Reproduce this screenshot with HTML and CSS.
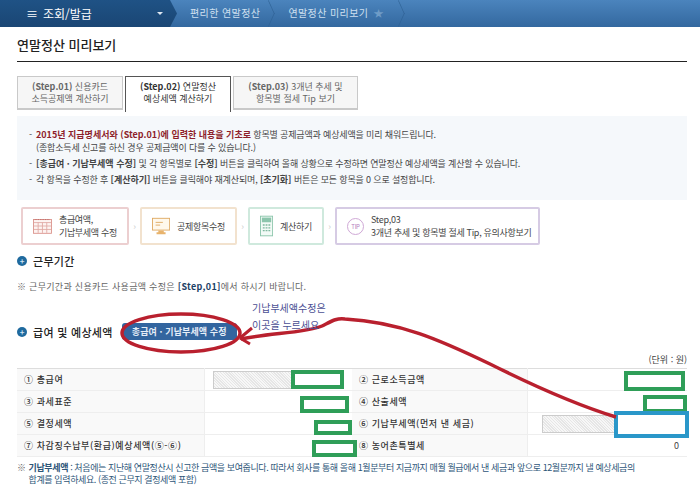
FILE: index.html
```html
<!DOCTYPE html>
<html lang="ko">
<head>
    <meta charset="UTF-8">
    <title>연말정산 미리보기</title>
    <link rel="stylesheet" href="styles.css">
</head>
<body>
    <nav class="topnav">
        <div class="nav-main">
            <span class="nav-burger">≡</span>
            <span class="nav-title">조회/발급</span>
            <span class="nav-caret"></span>
        </div>
        <div class="nav-crumb nav-crumb-first">편리한 연말정산</div>
        <div class="nav-crumb nav-crumb-last">연말정산 미리보기 <span class="nav-star">★</span></div>
    </nav>

    <div class="page">
        <h1 class="page-title">연말정산 미리보기</h1>

        <div class="tabs">
            <div class="tab"><b>(Step.01)</b> 신용카드<br>소득공제액 계산하기</div>
            <div class="tab tab-on"><b>(Step.02)</b> 연말정산<br>예상세액 계산하기</div>
            <div class="tab"><b>(Step.03)</b> 3개년 추세 및<br>항목별 절세 Tip 보기</div>
        </div>

        <div class="infobox">
            <p><span class="dot">-</span><b class="red">2015년 지급명세서와 (Step.01)에 입력한 내용을 기초로</b> 항목별 공제금액과 예상세액을 미리 채워드립니다.<br>(종합소득세 신고를 하신 경우 공제금액이 다를 수 있습니다.)</p>
            <p><span class="dot">-</span><b>[총급여 · 기납부세액 수정]</b> 및 각 항목별로 <b>[수정]</b> 버튼을 클릭하여 올해 상황으로 수정하면 연말정산 예상세액을 계산할 수 있습니다.</p>
            <p><span class="dot">-</span>각 항목을 수정한 후 <b>[계산하기]</b> 버튼을 클릭해야 재계산되며, <b>[초기화]</b> 버튼은 모든 항목을 0 으로 설정합니다.</p>
        </div>

        <div class="flow">
            <div class="flow-card flow-red">
                <svg width="22" height="18" viewBox="0 0 22 18"><rect x="0.5" y="1.5" width="21" height="16" fill="#fdf3f1" stroke="#d98f88"/><path d="M1 5h20M1 9h20M1 13h20M6 5v12M11 5v12M16 5v12" stroke="#e0a9a3" fill="none"/><path d="M2 1.5h18" stroke="#b9605a" stroke-dasharray="1 1" fill="none"/></svg>
                <span>총급여액,<br>기납부세액 수정</span>
            </div>
            <span class="flow-sep">›</span>
            <div class="flow-card flow-orange">
                <svg width="20" height="20" viewBox="0 0 20 20"><rect x="0.5" y="1.5" width="19" height="13" fill="#fff8ec" stroke="#dfa860"/><path d="M4 6h8M4 9h5" stroke="#dfa860" fill="none"/><path d="M7 15h6v2H7zM5 17h10v2H5z" fill="#e8b36c"/></svg>
                <span>공제항목수정</span>
            </div>
            <span class="flow-sep">›</span>
            <div class="flow-card flow-green">
                <svg width="14" height="22" viewBox="0 0 14 22"><rect x="0.5" y="0.5" width="13" height="21" fill="#f2faf6" stroke="#8cc5ac"/><rect x="2" y="2" width="10" height="5" fill="#8cc5ac"/><path d="M3 10h2M6 10h2M9 10h2M3 13h2M6 13h2M9 13h2M3 16h2M6 16h2M9 16h2" stroke="#7fb89f" stroke-width="1.5" fill="none"/></svg>
                <span>계산하기</span>
            </div>
            <span class="flow-sep">›</span>
            <div class="flow-card flow-purple">
                <span class="tip-badge">TIP</span>
                <span>Step,03<br>3개년 추세 및 항목별 절세 Tip, 유의사항보기</span>
            </div>
        </div>

        <h2 class="sec-head"><span class="sec-dot">+</span>근무기간</h2>
        <p class="note">※ 근무기간과 신용카드 사용금액 수정은 <b class="navy">[Step,01]</b>에서 하시기 바랍니다.</p>

        <div class="sec-row">
            <h2 class="sec-head"><span class="sec-dot">+</span>급여 및 예상세액</h2>
            <span class="edit-btn">총급여 · 기납부세액 수정</span>
        </div>

        <p class="unit">(단위 : 원)</p>
        <table class="tax-table">
            <tr>
                <th>① 총급여</th><td><span class="hatch hatch-left"></span></td>
                <th>② 근로소득금액</th><td></td>
            </tr>
            <tr>
                <th>③ 과세표준</th><td></td>
                <th>④ 산출세액</th><td></td>
            </tr>
            <tr>
                <th>⑤ 결정세액</th><td></td>
                <th>⑥ 기납부세액(먼저 낸 세금)</th><td><span class="hatch hatch-right"></span></td>
            </tr>
            <tr>
                <th>⑦ 차감징수납부(환급)예상세액(⑤-⑥)</th><td></td>
                <th>⑧ 농어촌특별세</th><td class="num">0</td>
            </tr>
        </table>

        <p class="foot"><span class="foot-mark">※</span><span><b>기납부세액</b> : 처음에는 지난해 연말정산시 신고한 금액을 보여줍니다. 따라서 회사를 통해 올해 1월분부터 지금까지 매월 월급에서 낸 세금과 앞으로 12월분까지 낼 예상세금의<br>합계를 입력하세요. (종전 근무지 결정세액 포함)</span></p>
    </div>

    <!-- hand drawn marks on top of the screenshot -->
    <svg class="marks" width="700" height="498" viewBox="0 0 700 498">
        <g fill="#fff" stroke="#2f9e58" stroke-width="4">
            <rect x="293" y="372" width="49" height="15"/>
            <rect x="302" y="398" width="45" height="13"/>
            <rect x="316" y="422" width="34" height="11"/>
            <rect x="314" y="442" width="41" height="13"/>
            <rect x="626" y="373" width="57" height="16"/>
            <rect x="645" y="397" width="40" height="14"/>
        </g>
        <rect x="616" y="413" width="71" height="23" fill="#fff" stroke="#2a97c9" stroke-width="4"/>
        <g fill="none" stroke="#b9202e">
            <ellipse cx="181" cy="333" rx="59" ry="19" stroke-width="3.5"/>
            <path d="M241 339C270 333 305 333 322 326C332 321 336 318 345 319C400 322 440 340 490 364C530 384 580 406 616 417" stroke-width="3.5"/>
            <path d="M240 338l12 -10M240 338l10 6" stroke-width="3"/>
        </g>
    </svg>
    <div class="callout">기납부세액수정은<br>이곳을 누르세요</div>
</body>
</html>
```

FILE: styles.css
```css
html, body {
    margin: 0;
    padding: 0;
}
body {
    width: 700px;
    height: 498px;
    overflow: hidden;
    position: relative;
    background: #fff;
    color: #444;
    font-family: "Noto Sans CJK KR", "Noto Sans", sans-serif;
    font-size: 9px;
}
b {
    font-weight: 700;
}
p, h1, h2 {
    margin: 0;
}

.topnav {
    height: 27px;
    display: flex;
    align-items: center;
    background: linear-gradient(#4b84bd, #33689f);
    color: #cfe0f0;
    font-size: 10px;
    letter-spacing: 0.4px;
}
.nav-main {
    width: 177px;
    height: 27px;
    box-sizing: border-box;
    padding: 0 14px 0 26px;
    display: flex;
    align-items: center;
    color: #fff;
    letter-spacing: 0;
    background: linear-gradient(#1f5285, #1a4674);
    clip-path: polygon(0 0, 170px 0, 100% 50%, 170px 100%, 0 100%);
}
.nav-burger {
    font-size: 12px;
    width: 17px;
}
.nav-title {
    font-size: 12px;
    flex: 1;
}
.nav-caret {
    border: 3px solid transparent;
    border-top: 3px solid #dfe8f2;
    border-bottom: 0;
}
.nav-crumb {
    position: relative;
    height: 27px;
    line-height: 26px;
    padding-right: 28px;
}
.nav-crumb-first {
    margin-left: 13px;
}
.nav-crumb-last {
    padding-right: 0;
}
/* thin chevron after each crumb */
.nav-crumb::after {
    content: "";
    position: absolute;
    top: 4px;
    right: 10px;
    width: 18px;
    height: 18px;
    border-top: 1px solid #2f6295;
    border-right: 1px solid #2f6295;
    transform: scaleX(0.45) rotate(45deg);
}
.nav-crumb-last::after {
    right: -24px;
}
.nav-star {
    color: #6f9cc7;
    margin-left: 2px;
}

.page {
    padding: 0 13px 0 17px;
}
.page-title {
    height: 34px;
    border-bottom: 1px solid #222;
    font-size: 13px;
    font-weight: 500;
    line-height: 35px;
    color: #222;
}

.tabs {
    display: flex;
    gap: 2px;
    margin-top: 14px;
    height: 35px;
    align-items: flex-start;
}
.tab {
    width: 106px;
    height: 34px;
    box-sizing: border-box;
    padding-top: 4px;
    border: 1px solid #c9c9c9;
    border-bottom-width: 2px;
    background: #f6f6f6;
    color: #666;
    line-height: 12px;
    text-align: center;
}
.tab-on {
    height: 36px;
    background: #fff;
    border: 1px solid #555;
    border-bottom: 0;
    color: #333;
}
.tab:last-child {
    width: 125px;
}

.infobox {
    margin-top: 5px;
    height: 84px;
    box-sizing: border-box;
    padding: 12px 12px 0;
    background: #f5f8fb;
    color: #444;
    line-height: 13px;
    letter-spacing: -0.15px;
}
.infobox b {
    letter-spacing: 0;
}
.infobox p {
    margin-bottom: 3px;
    padding-left: 7px;
    white-space: nowrap;
}
.dot {
    display: inline-block;
    width: 7px;
    margin-left: -7px;
}
.red {
    color: #8e1f2b;
}

.flow {
    display: flex;
    align-items: center;
    margin: 7px 0 0 4px;
    height: 38px;
    color: #444;
    line-height: 13px;
    letter-spacing: -0.3px;
}
.flow-card {
    height: 38px;
    box-sizing: border-box;
    border: 2px solid;
    border-radius: 2px;
    display: flex;
    align-items: center;
    gap: 7px;
    padding: 0 10px;
    white-space: nowrap;
}
.flow-sep {
    width: 11px;
    text-align: center;
    color: #ccc;
}
.flow-red { width: 108px; border-color: #eccfd0; }
.flow-orange { width: 97px; border-color: #f2e2ce; }
.flow-green { width: 76px; border-color: #cfe9dd; }
.flow-purple { width: 205px; border-color: #d6cbe4; }
.tip-badge {
    width: 15px;
    height: 15px;
    border: 1px solid #cfa8d6;
    border-radius: 50%;
    color: #b57fc0;
    font-size: 6px;
    line-height: 15px;
    text-align: center;
    flex: none;
}

.sec-head {
    display: flex;
    align-items: center;
    gap: 6px;
    font-size: 11px;
    font-weight: 500;
    color: #222;
    height: 14px;
    letter-spacing: 0.3px;
}
.flow + .sec-head {
    margin-top: 9px;
}
.sec-dot {
    width: 10px;
    height: 10px;
    border-radius: 50%;
    background: #1f6a9e;
    color: #cfe6f5;
    font-size: 8px;
    font-weight: 700;
    line-height: 10px;
    letter-spacing: 0;
    text-align: center;
}
.note {
    margin-top: 12px;
    color: #666;
    line-height: 13px;
    letter-spacing: 0.3px;
}
.navy {
    color: #1d3f66;
}

.sec-row {
    display: flex;
    align-items: center;
    gap: 9px;
    margin-top: 30px;
}
.edit-btn {
    width: 115px;
    height: 17px;
    border-radius: 3px;
    background: #33659f;
    color: #e6eef8;
    font-weight: 700;
    line-height: 17px;
    letter-spacing: 0.1px;
    text-align: center;
}
.unit {
    margin-top: 13px;
    height: 15px;
    text-align: right;
    line-height: 13px;
}

.tax-table {
    width: 670px;
    border-collapse: collapse;
    border-top: 1px solid #ddd;
    border-bottom: 1px solid #ddd;
    table-layout: fixed;
}
.tax-table tr {
    height: 22px;
    border-bottom: 1px solid #eee;
}
.tax-table th {
    width: 180px;
    padding: 0 0 0 7px;
    background: #f9f9f9;
    color: #333;
    font-weight: 500;
    letter-spacing: 0.6px;
    text-align: left;
    white-space: nowrap;
    border-right: 1px solid #eee;
}
.tax-table td {
    padding: 0;
    position: relative;
}
.tax-table td:nth-child(2) {
    width: 147px;
}
.tax-table th:nth-child(3) {
    width: 168px;
}
.tax-table td.num {
    padding-right: 8px;
    text-align: right;
}
.hatch {
    display: block;
    height: 16px;
    border: 1px solid #ccc;
    background: repeating-linear-gradient(45deg, #f7f7f7, #f7f7f7 1px, #e6e6e6 1px, #e6e6e6 2px);
}
.hatch-left {
    width: 85px;
    margin-left: 8px;
}
.hatch-right {
    width: 80px;
    margin-left: 14px;
}

.foot {
    display: flex;
    gap: 3px;
    margin-top: 5px;
    color: #2d5578;
    line-height: 12px;
    letter-spacing: -0.4px;
    white-space: nowrap;
}
.foot-mark {
    color: #666;
}

.marks {
    position: absolute;
    left: 0;
    top: 0;
    pointer-events: none;
}
.callout {
    position: absolute;
    left: 252px;
    top: 299px;
    color: #4b4f94;
    font-size: 10px;
    line-height: 17px;
}
```
